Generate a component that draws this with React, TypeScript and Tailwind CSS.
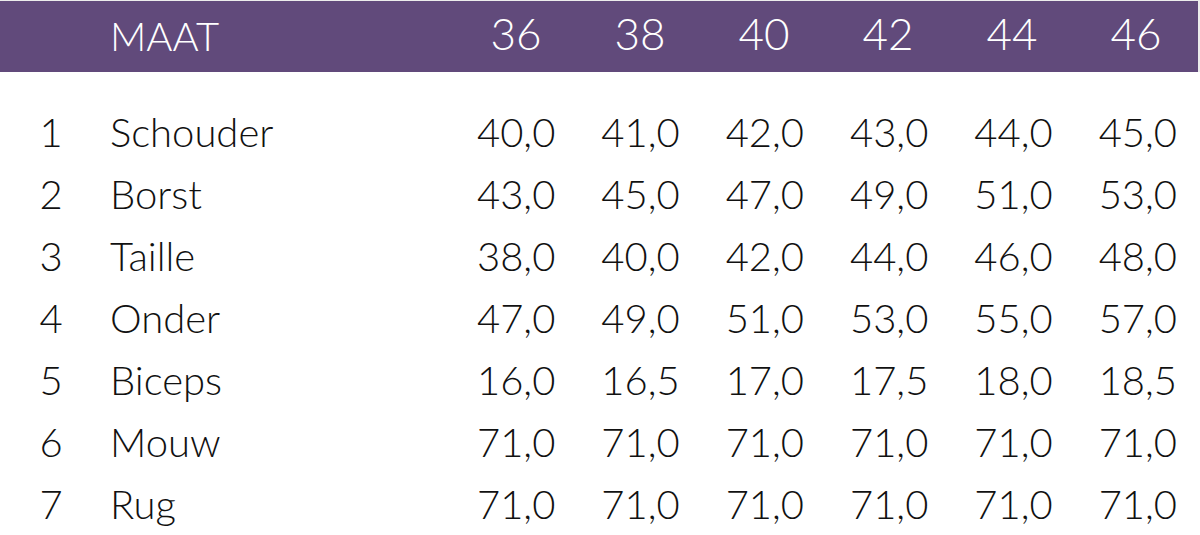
import React from 'react';

const sizes = ['36', '38', '40', '42', '44', '46'];

const rows: { label: string; values: string[] }[] = [
  { label: 'Schouder', values: ['40,0', '41,0', '42,0', '43,0', '44,0', '45,0'] },
  { label: 'Borst', values: ['43,0', '45,0', '47,0', '49,0', '51,0', '53,0'] },
  { label: 'Taille', values: ['38,0', '40,0', '42,0', '44,0', '46,0', '48,0'] },
  { label: 'Onder', values: ['47,0', '49,0', '51,0', '53,0', '55,0', '57,0'] },
  { label: 'Biceps', values: ['16,0', '16,5', '17,0', '17,5', '18,0', '18,5'] },
  { label: 'Mouw', values: ['71,0', '71,0', '71,0', '71,0', '71,0', '71,0'] },
  { label: 'Rug', values: ['71,0', '71,0', '71,0', '71,0', '71,0', '71,0'] },
];

export default function App() {
  return (
    <div className="w-[1200px] h-[535px] bg-white font-['Lato','Liberation_Sans',sans-serif] font-light">
      <div className="pt-px pr-[2px] bg-[#ececec]">
        <div className="grid grid-cols-[102px_352px_repeat(6,1fr)] items-center h-[71px] bg-[#614a7b] text-white leading-none">
          <div />
          <div className="pl-[8px] text-[40px] -translate-y-px">MAAT</div>
          {sizes.map((s) => (
            <div key={s} className="text-center text-[44px] -translate-y-[4px]">
              {s}
            </div>
          ))}
        </div>
      </div>

      <div className="pt-[29px] text-[#111] text-[40px] leading-none">
        {rows.map((row, i) => (
          <div key={row.label} className="grid grid-cols-[102px_352px_repeat(6,1fr)] items-center h-[62px]">
            <div className="text-center">{i + 1}</div>
            <div className="pl-[8px]">{row.label}</div>
            {row.values.map((v, j) => (
              <div key={j} className="text-center">
                {v}
              </div>
            ))}
          </div>
        ))}
      </div>
    </div>
  );
}
